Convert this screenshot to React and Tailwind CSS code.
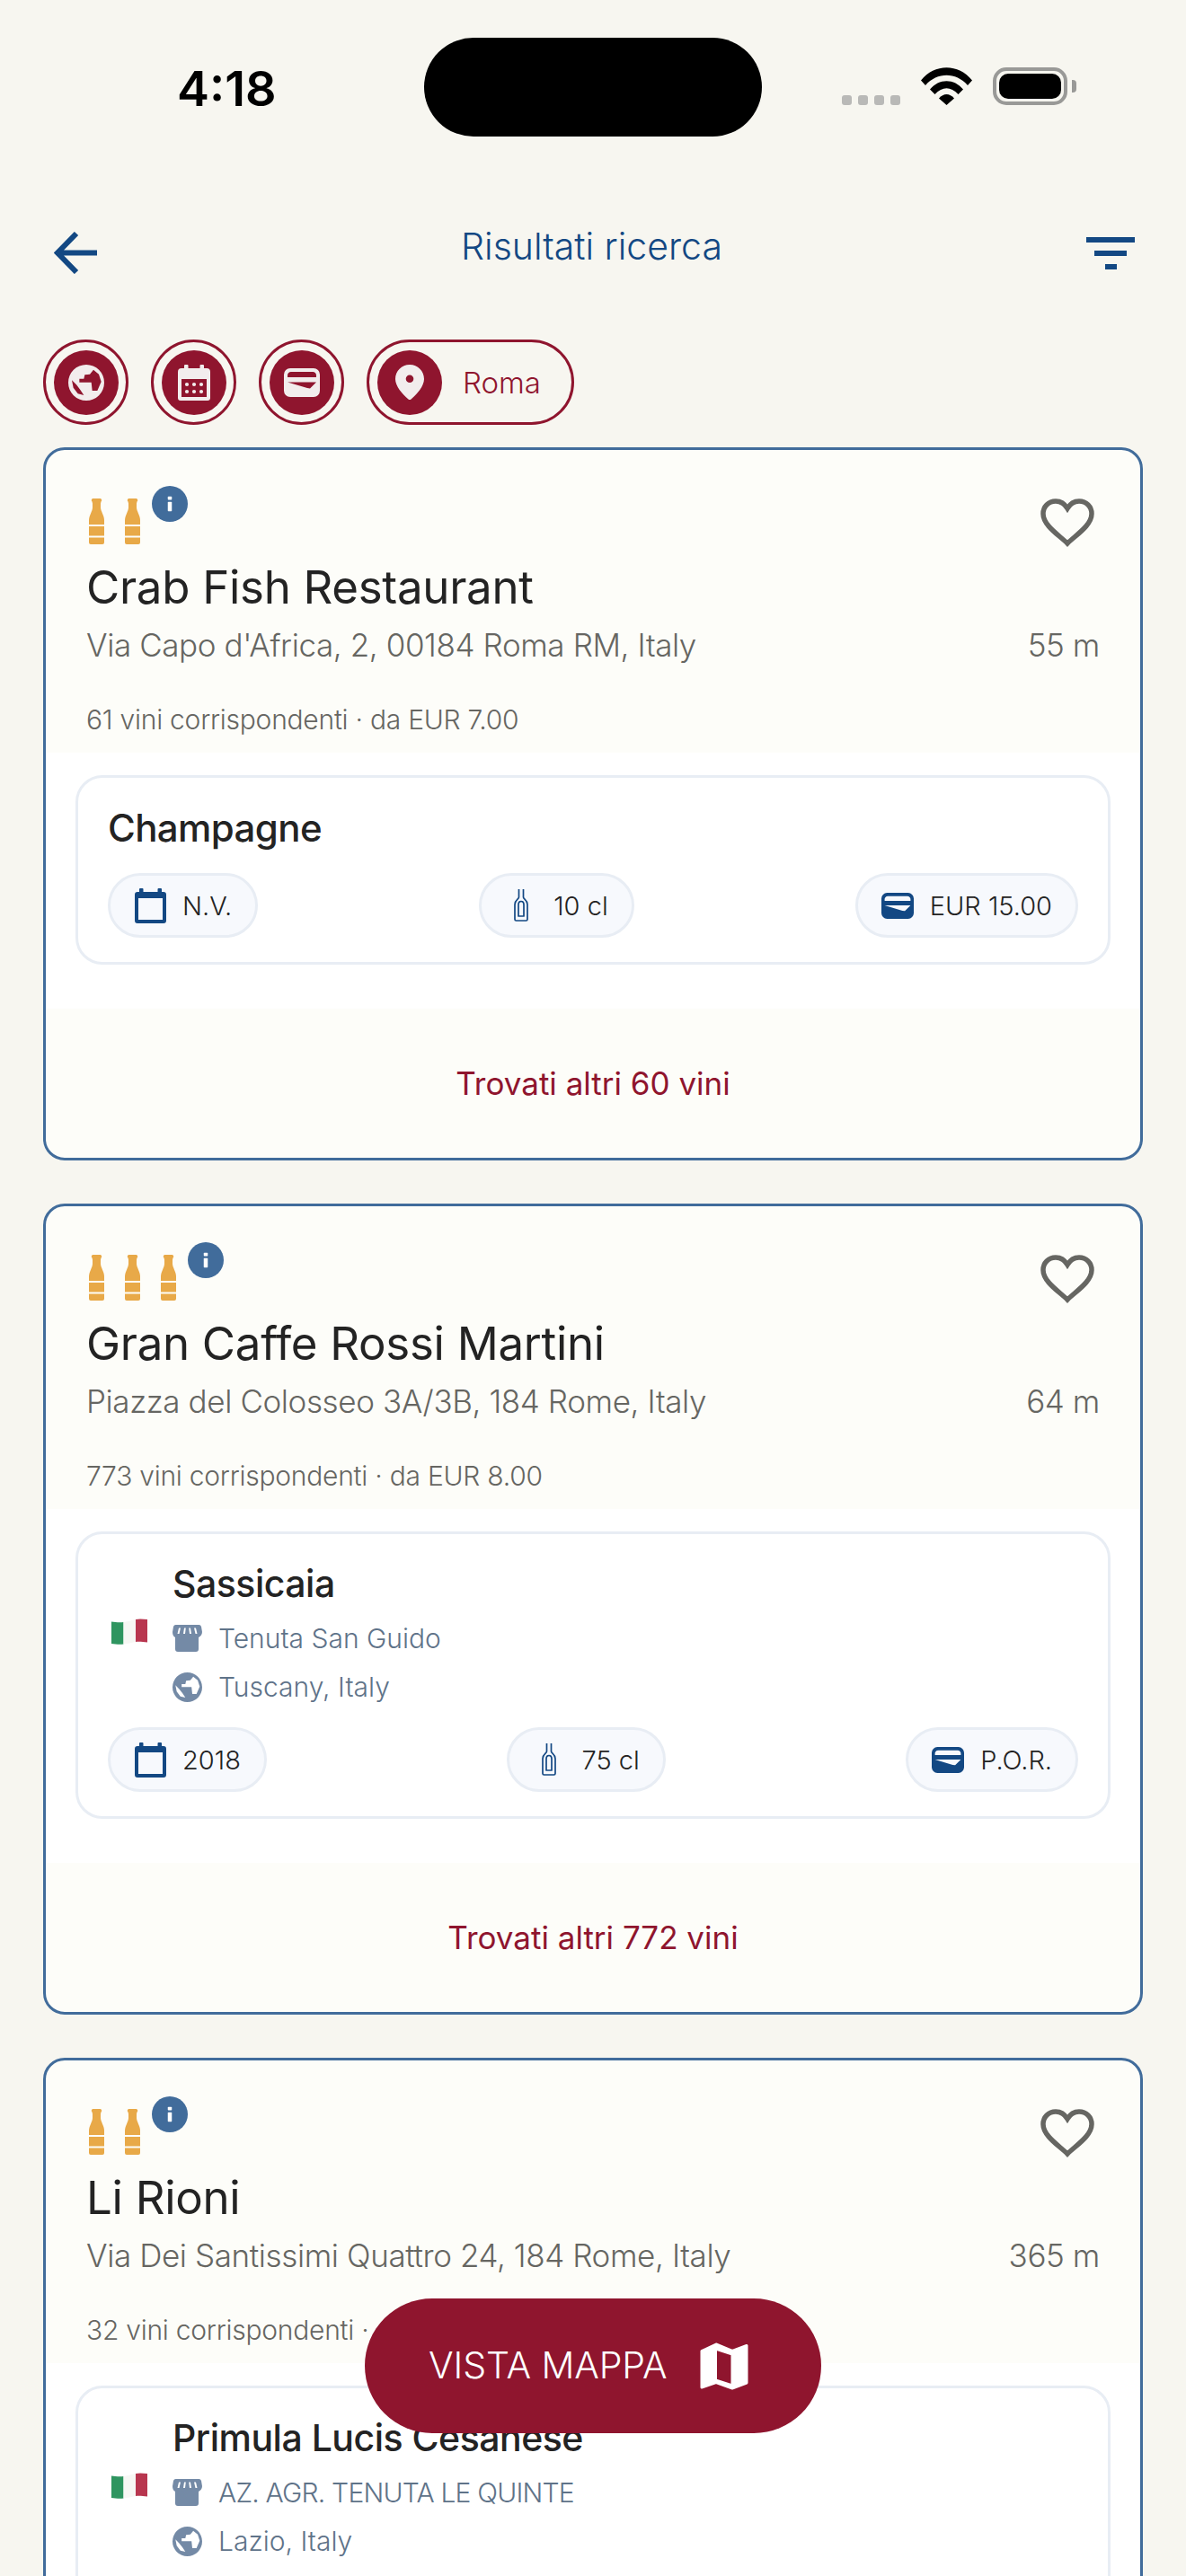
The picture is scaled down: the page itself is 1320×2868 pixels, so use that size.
import React from "react";

function Globe({ className }) {
  return (
    <svg viewBox="0 0 24 24" className={className} fill="currentColor">
      <path
        fillRule="evenodd"
        d="M12 0a12 12 0 1 0 0 24a12 12 0 1 0 0-24ZM7.400 9.400V11.800H15.400L16 17.400H19.400L22 11.400L20.400 6.400L16.800 3.400L14.400 6.400L11 6.800L10.400 9.400ZM2.400 10.400L5.400 13.400L8 16.800L10.400 20.400L6.400 19.400L3.400 15.400Z"
      />
    </svg>
  );
}

function CalendarDots({ className }) {
  return (
    <svg viewBox="0 0 36 40" className={className} fill="currentColor">
      <path
        fillRule="evenodd"
        d="M8 0h2.500a1 1 0 0 1 1 1v3h13V1a1 1 0 0 1 1-1H28a1 1 0 0 1 1 1v3h3a4 4 0 0 1 4 4v29a3 3 0 0 1-3 3H3a3 3 0 0 1-3-3V8a4 4 0 0 1 4-4h3V1a1 1 0 0 1 1-1ZM4 16v20h28V16Z"
      />
      <circle cx="10" cy="22" r="2.100" />
      <circle cx="18" cy="22" r="2.100" />
      <circle cx="26" cy="22" r="2.100" />
      <circle cx="10" cy="30" r="2.100" />
      <circle cx="18" cy="30" r="2.100" />
      <circle cx="26" cy="30" r="2.100" />
    </svg>
  );
}

function CalendarPlain({ className }) {
  return (
    <svg viewBox="0 0 35 39" className={className} fill="currentColor">
      <path
        fillRule="evenodd"
        d="M6 0h2.500a1 1 0 0 1 1 1v3h16V1a1 1 0 0 1 1-1H29a1 1 0 0 1 1 1v3h2a3 3 0 0 1 3 3v29a3 3 0 0 1-3 3H3a3 3 0 0 1-3-3V7a3 3 0 0 1 3-3h2V1a1 1 0 0 1 1-1ZM4 11v24h27V11Z"
      />
    </svg>
  );
}

function Wallet({ className }) {
  return (
    <svg viewBox="0 0 40 32" className={className} fill="currentColor">
      <path
        fillRule="evenodd"
        d="M7 0h26a7 7 0 0 1 7 7v18a7 7 0 0 1-7 7H7a7 7 0 0 1-7-7V7a7 7 0 0 1 7-7ZM8 4a4 4 0 0 0-4 4.500V10H36V8.500a4 4 0 0 0-4-4.500ZM4 15.500L26 22L29 22.500L36 15.500Z"
      />
    </svg>
  );
}

function Pin({ className }) {
  return (
    <svg viewBox="0 0 32 39" className={className} fill="currentColor">
      <path
        fillRule="evenodd"
        d="M16 0C7 0 0 7 0 16c0 8 8 17 14.500 22.500a2.200 2.200 0 0 0 3 0C24 33 32 24 32 16C32 7 25 0 16 0ZM16 11.500a4.300 4.300 0 1 1 0 8.600a4.300 4.300 0 1 1 0-8.600Z"
      />
    </svg>
  );
}

function Store({ className }) {
  return (
    <svg viewBox="0 0 33 30" className={className} fill="currentColor">
      <path
        fillRule="evenodd"
        d="M4 0h25a3 3 0 0 1 3 2l1 6c0 3-2 5-4 6v13a3 3 0 0 1-3 3H6a3 3 0 0 1-3-3V14C1 13 0 11 0 8l1-6a3 3 0 0 1 3-2ZM7 3.500L5.500 10h2L9 3.500ZM13 3.500L12 10h2L14.800 3.500ZM18.200 3.500L19 10h2L20 3.500ZM24 3.500L25.500 10h2L26 3.500Z"
      />
    </svg>
  );
}

function OutlineBottle({ className }) {
  return (
    <svg viewBox="0 0 16 36" className={className} fill="none" stroke="currentColor" strokeWidth="1.700" strokeLinejoin="round">
      <path d="M5.500 0V9C5.500 11 1 12 1 17V33.500A1.500 1.500 0 0 0 2.500 35H13.500A1.500 1.500 0 0 0 15 33.500V17C15 12 10.500 11 10.500 9V0" />
      <path d="M5 30V17C5 15 6 13.500 8 13.500S11 15 11 17V30Z" />
    </svg>
  );
}

function GoldBottle() {
  return (
    <svg viewBox="0 0 17 51" className="w-[17px] h-[51px] shrink-0">
      <path
        fill="#e8a948"
        d="M5 0h7a2 2 0 0 1 1.500 3.500L13 5.500V10c0 4 4 9 4 14v5H0v-5c0-5 4-10 4-14V5.500L3.500 3.500A2 2 0 0 1 5 0ZM0 31h17v10.500H0ZM0 43.500h17V49a2 2 0 0 1-2 2H2a2 2 0 0 1-2-2Z"
      />
    </svg>
  );
}

function Heart() {
  return (
    <svg viewBox="0 0 60 54" className="w-[60px] h-[54px]" fill="none" stroke="#666662" strokeWidth="5.500">
      <path d="M30 50 C21 41 3 30 3 17 C3 9 9 3 17 3 C23 3 27 6 30 11 C33 6 37 3 43 3 C51 3 57 9 57 17 C57 30 39 41 30 50 Z" />
    </svg>
  );
}

function Flag() {
  return (
    <svg viewBox="0 0 40 30" className="w-[40px] h-[30px] shrink-0">
      <path fill="#2f9560" d="M0 3.500C4 4 9 4.500 13.500 4V28.500C9 29 4 28.500 0 28Z" />
      <path fill="#f7f7f4" d="M13.500 4C18 3.500 22 2 27 1V26C22 27 18 28 13.500 28.500Z" />
      <path fill="#b8364f" d="M27 1C31 0 35 .5 40 1V26.500C35 26 31 25.500 27 26Z" />
    </svg>
  );
}

function Chip({ Icon, iconClass, label }) {
  return (
    <div className={`flex items-center h-[95px] rounded-full border-[3px] border-[#8f152e] pl-[9px] ${label ? "w-[231px]" : "w-[95px]"}`}>
      <div className="w-[72px] h-[72px] shrink-0 rounded-full bg-[#8f152e] flex items-center justify-center text-[#f2eded]">
        <Icon className={iconClass} />
      </div>
      {label && <span className="ml-[23px] mt-[2px] text-[33px] leading-none font-light text-[#8f152e]">{label}</span>}
    </div>
  );
}

function Pill({ icon, children }) {
  return (
    <div className="h-[72px] flex items-center gap-[18px] px-[26px] rounded-full border-[3px] border-[#e8edf4] bg-[#f7f9fd] text-[#232323] text-[29px] font-light">
      <span className="w-[36px] flex justify-center">{icon}</span>
      <span className="mt-[2px]">{children}</span>
    </div>
  );
}

function Meta({ Icon, children, iconClass, tight }) {
  return (
    <div className="flex items-center h-[54px]">
      <span className="w-[33px] flex justify-center shrink-0">
        <Icon className={`${iconClass} text-[#748aa6]`} />
      </span>
      <span className={`ml-[18px] text-[30px] font-light text-[#5f7389] whitespace-nowrap ${tight ? "tracking-[-0.8px]" : "tracking-normal"}`}>{children}</span>
    </div>
  );
}

function Wine({ name, producer, region, year, size, price, tight }) {
  return (
    <div className="rounded-[30px] border-[3px] border-[#e8edf4] bg-white px-[33px] pb-[27px]">
      {producer ? (
        <div className="flex items-start pt-[25px] pb-[18px]">
          <div className="w-[72px] pl-[4px] mt-[69px] shrink-0">
            <Flag />
          </div>
          <div className="flex flex-col min-w-0">
            <div className="h-[60px] leading-[60px] text-[41px] font-medium text-[#232323] whitespace-nowrap tracking-[-0.5px]">{name}</div>
            <div className="h-[4px]" />
            <Meta Icon={Store} iconClass="w-[33px] h-[30px]" tight={tight}>{producer}</Meta>
            <Meta Icon={Globe} iconClass="w-[33px] h-[33px]">{region}</Meta>
          </div>
        </div>
      ) : (
        <div className="h-[106px] pt-[26px] leading-[60px] text-[42px] font-medium text-[#232323] tracking-[-0.6px]">{name}</div>
      )}
      {year && (
        <div className="flex items-center justify-between">
          <Pill icon={<CalendarPlain className="w-[35px] h-[39px] text-[#134883]" />}>{year}</Pill>
          <Pill icon={<OutlineBottle className="w-[16px] h-[36px] text-[#134883]" />}>{size}</Pill>
          <Pill icon={<Wallet className="w-[36px] h-[29px] text-[#134883]" />}>{price}</Pill>
        </div>
      )}
    </div>
  );
}

function Card({ bottles, name, address, distance, count, from, more, wine }) {
  return (
    <div className="rounded-[24px] border-[3px] border-[#416c9b] bg-[#fdfdf9] overflow-hidden shrink-0">
      <div className="h-[337px] px-[45px]">
        <div className="flex items-start pt-[40px] h-[90px] pl-[3px]">
          <div className="flex gap-[23px] pt-[14px]">
            {Array.from({ length: bottles }).map((_, i) => (
              <GoldBottle key={i} />
            ))}
          </div>
          <div className="ml-[13px] w-[40px] h-[40px] rounded-full bg-[#416c9b] flex items-center justify-center">
            <svg viewBox="0 0 8 22" className="w-[6px] h-[20px]" fill="#fff">
              <rect x="1" width="6" height="5" rx="1" />
              <rect x="1" y="8" width="6" height="14" rx="1" />
            </svg>
          </div>
          <div className="ml-auto mr-[6px] pt-[14px]">
            <Heart />
          </div>
        </div>
        <div className="mt-[32px] text-[51px] leading-[62px] font-normal text-[#232323] whitespace-nowrap tracking-[-0.3px]">{name}</div>
        <div className="mt-[8px] flex justify-between items-center text-[35px] leading-[50px] font-light text-[#666662] tracking-[-0.4px]">
          <span className="whitespace-nowrap">{address}</span>
          <span>{distance}</span>
        </div>
        <div className="mt-[38px] text-[30px] leading-[40px] font-light text-[#666662] tracking-[-0.25px] whitespace-nowrap">
          {count} vini corrispondenti · da EUR {from}
        </div>
      </div>
      <div className="bg-white pt-[25px] pb-[49px] px-[33px]">
        <Wine {...wine} />
      </div>
      {more && <div className="h-[166px] flex items-center justify-center text-[35px] text-[#8f152e] font-normal">{more}</div>}
    </div>
  );
}

export default function App() {
  return (
    <div className="relative h-[2868px] w-[1320px] overflow-hidden bg-[#f7f6f0] font-['Inter',sans-serif]">
      <div className="flex items-start pt-[42px] h-[258px]">
        <div className="w-[472px] pl-[197px] pt-[32px] text-[54px] leading-[50px] font-semibold text-black">4:18</div>
        <div className="w-[376px] h-[110px] rounded-[55px] bg-black" />
        <div className="flex items-end pl-[89px] pt-[33px] h-[75px]">
          <div className="flex gap-[7px]">
            <span className="w-[11px] h-[11px] rounded-[3px] bg-[#b9b9b7]" />
            <span className="w-[11px] h-[11px] rounded-[3px] bg-[#b9b9b7]" />
            <span className="w-[11px] h-[11px] rounded-[3px] bg-[#b9b9b7]" />
            <span className="w-[11px] h-[11px] rounded-[3px] bg-[#b9b9b7]" />
          </div>
          <svg viewBox="0 0 57 42" className="w-[57px] h-[42px] ml-[23px]" fill="#000">
            <path d="M0 14.500C15 -4.500 42 -4.500 57 14.500L52 20C39 5 18 5 5 20Z" />
            <path d="M10 24.500C20 12 37 12 47 24.500L41.500 30C33 21 24 21 15.500 30Z" />
            <path d="M20 34.500C25 28.500 32 28.500 37 34.500L28.500 42Z" />
          </svg>
          <div className="ml-[23px] w-[83px] h-[42px] rounded-[15px] border-[4px] border-[#999997] p-[3px]">
            <div className="w-full h-full rounded-[10px] bg-black" />
          </div>
          <div className="ml-[5px] mb-[14px] w-[5px] h-[14px] rounded-r-[4px] bg-[#999997]" />
        </div>
      </div>

      <div className="flex items-start justify-between pl-[60px] pr-[57px] h-[120px]">
        <svg viewBox="0 0 48 47" className="w-[48px] h-[47px]" fill="none" stroke="#134883" strokeWidth="6">
          <path d="M48 23.500H5M25 2L4 23.500L25 45" />
        </svg>
        <div className="-mt-[4px] text-[41px] leading-[40px] font-light text-[#134883]">Risultati ricerca</div>
        <div className="flex flex-col items-center gap-[9px] pt-[6px]">
          <span className="w-[54px] h-[6px] bg-[#134883]" />
          <span className="w-[36px] h-[6px] bg-[#134883]" />
          <span className="w-[13px] h-[6px] bg-[#134883]" />
        </div>
      </div>

      <div className="flex gap-[25px] pl-[48px]">
        <Chip Icon={Globe} iconClass="w-[40px] h-[40px]" />
        <Chip Icon={CalendarDots} iconClass="w-[36px] h-[40px]" />
        <Chip Icon={Wallet} iconClass="w-[40px] h-[32px]" />
        <Chip Icon={Pin} iconClass="w-[32px] h-[39px]" label="Roma" />
      </div>

      <div className="flex flex-col gap-[48px] px-[48px] mt-[25px]">
        <Card
          bottles={2}
          name="Crab Fish Restaurant"
          address="Via Capo d'Africa, 2, 00184 Roma RM, Italy"
          distance="55 m"
          count="61"
          from="7.00"
          more="Trovati altri 60 vini"
          wine={{ name: "Champagne", year: "N.V.", size: "10 cl", price: "EUR 15.00" }}
        />
        <Card
          bottles={3}
          name="Gran Caffe Rossi Martini"
          address="Piazza del Colosseo 3A/3B, 184 Rome, Italy"
          distance="64 m"
          count="773"
          from="8.00"
          more="Trovati altri 772 vini"
          wine={{ name: "Sassicaia", producer: "Tenuta San Guido", region: "Tuscany, Italy", year: "2018", size: "75 cl", price: "P.O.R." }}
        />
        <Card
          bottles={2}
          name="Li Rioni"
          address="Via Dei Santissimi Quattro 24, 184 Rome, Italy"
          distance="365 m"
          count="32"
          from="9.00"
          wine={{ name: "Primula Lucis Cesanese", producer: "AZ. AGR. TENUTA LE QUINTE", region: "Lazio, Italy", tight: true }}
        />
      </div>

      <div className="absolute left-[406px] top-[2559px] w-[508px] h-[150px] rounded-full bg-[#8f152e] flex items-center pl-[71px] gap-[37px] text-white">
        <span className="text-[41px] font-light tracking-[-0.1px] whitespace-nowrap">VISTA MAPPA</span>
        <svg viewBox="0 0 54 53" className="w-[54px] h-[53px]" fill="#fff" stroke="#fff" strokeWidth="3" strokeLinejoin="round">
          <path
            fillRule="evenodd"
            d="M2 9.500L18 2L36 9.500L52 3.500V45L36 51L18 44.500L2 50ZM17.500 7V42L36 48V13Z"
          />
        </svg>
      </div>
    </div>
  );
}
